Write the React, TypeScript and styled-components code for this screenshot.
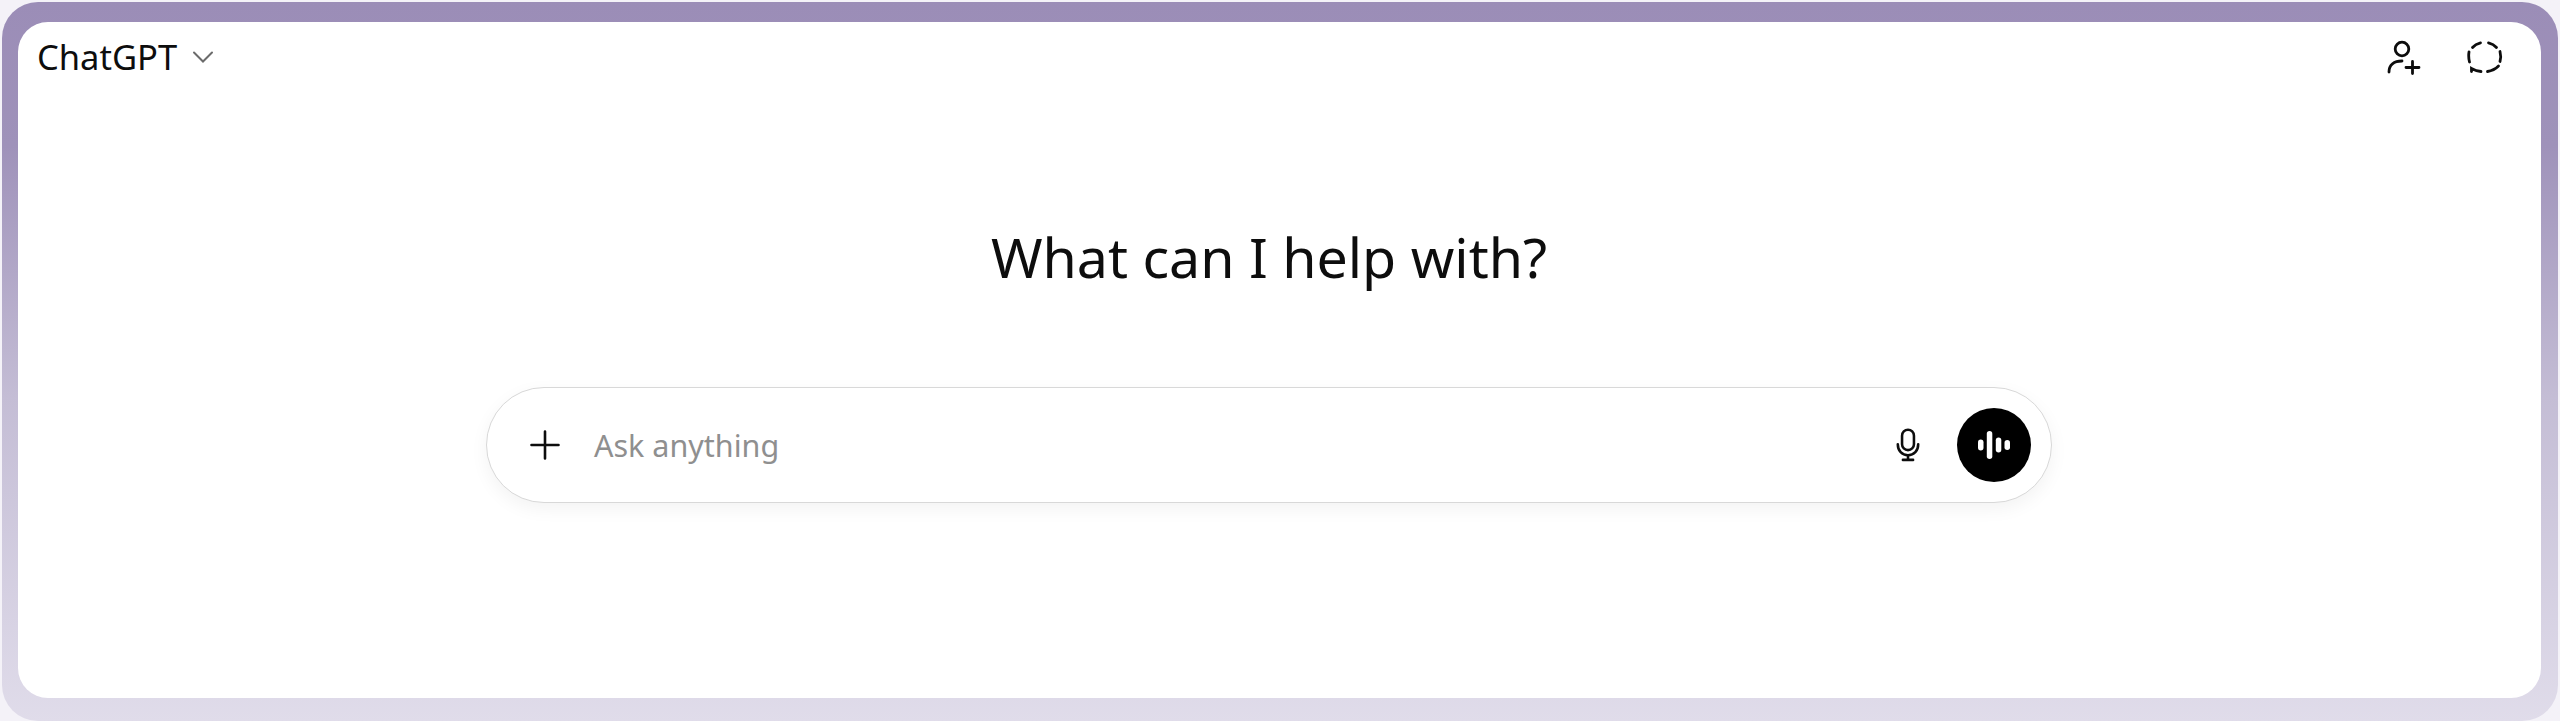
import React from 'react';
import styled, { createGlobalStyle } from 'styled-components';

const GlobalStyle = createGlobalStyle`
  html, body {
    margin: 0;
    background: #f4f2f8;
  }
  body {
    font-family: "Noto Sans", "Open Sans", Arial, sans-serif;
  }
`;

const Frame = styled.div`
  box-sizing: border-box;
  height: 719px;
  margin: 2px 2px 0;
  padding: 20px 17px 23px 16px;
  border-radius: 36px;
  background: linear-gradient(180deg, #9b8db7 0%, #9f92ba 20%, #c4bdd5 55%, #e0dcea 100%);
`;

const Panel = styled.main`
  display: flex;
  flex-direction: column;
  box-sizing: border-box;
  height: 100%;
  padding: 0 19px;
  border-radius: 30px;
  background: #ffffff;
`;

const Header = styled.header`
  display: flex;
  align-items: center;
  justify-content: space-between;
  height: 70px;
  flex: none;
`;

const ModelPicker = styled.button`
  display: flex;
  align-items: center;
  gap: 15px;
  padding: 0;
  border: none;
  background: none;
  font: inherit;
  font-size: 34.5px;
  line-height: 48px;
  color: #0d0d0d;
`;

const HeaderActions = styled.div`
  display: flex;
  align-items: center;
  gap: 45px;
  padding-right: 19px;
`;

const IconButton = styled.button`
  display: flex;
  align-items: center;
  justify-content: center;
  padding: 0;
  border: none;
  background: none;
  color: #0d0d0d;
`;

const Center = styled.section`
  display: flex;
  flex-direction: column;
  width: 1566px;
  margin-left: 449px;
`;

const Heading = styled.h1`
  margin: 130px 0 0;
  text-align: center;
  font-size: 55.5px;
  font-weight: 400;
  line-height: 70px;
  color: #0d0d0d;
`;

const Composer = styled.div`
  display: flex;
  align-items: center;
  box-sizing: border-box;
  height: 116px;
  margin-top: 95px;
  padding: 0 20px 0 43px;
  border: 1.5px solid #d8d8d8;
  border-radius: 58px;
  background: #ffffff;
  box-shadow: 0 6px 18px rgba(0, 0, 0, 0.05);
`;

const Placeholder = styled.span`
  flex: 1;
  margin-left: 34px;
  font-size: 30.5px;
  color: #8f8f8f;
`;

const VoiceButton = styled.button`
  display: flex;
  align-items: center;
  justify-content: center;
  width: 74px;
  height: 74px;
  margin-left: 36px;
  padding: 0;
  border: none;
  border-radius: 50%;
  background: #000000;
  color: #ffffff;
`;

const UserPlusIcon = () => (
  <svg width="36" height="36" viewBox="0 0 36 36" fill="none" stroke="currentColor" strokeWidth="2.8" strokeLinecap="round">
    <circle cx="16" cy="10" r="6.8" />
    <path d="M3 33c0-7 5-11 13-11" />
    <path d="M20 28.5h13M26.5 22.5v12" />
  </svg>
);

const DashedChatIcon = () => (
  <svg width="36" height="33" viewBox="0 0 36 33" fill="none" stroke="currentColor" strokeWidth="2.8" strokeLinecap="round">
    <path d="M2 11Q1.2 16 2.5 21" />
    <path d="M5.5 6.5Q8.5 3 13.5 1.8" />
    <path d="M21.5 1.8Q26.5 3 29.5 6.5" />
    <path d="M33 10.5Q34.4 16 33 20.5" />
    <path d="M31.5 25Q27 29.5 20.5 30.5" />
    <path d="M14 30.5Q9 30 4.5 27.5L4.5 30.5" />
  </svg>
);

const MicIcon = () => (
  <svg width="26" height="34" viewBox="0 0 30 40" fill="none" stroke="currentColor" strokeWidth="3" strokeLinecap="round">
    <rect x="8" y="2" width="14" height="24" rx="7" />
    <path d="M3 19c0 8 5 13 12 13s12-5 12-13" />
    <path d="M15 32v5M9 37.5h12" />
  </svg>
);

const WaveIcon = () => (
  <svg width="32" height="30" viewBox="0 0 32 30" fill="currentColor">
    <rect x="0" y="9.5" width="5.5" height="11" rx="2.75" />
    <rect x="8.8" y="1" width="5.5" height="28" rx="2.75" />
    <rect x="17.8" y="7.5" width="5.5" height="15" rx="2.75" />
    <rect x="26.5" y="10" width="5.5" height="10" rx="2.75" />
  </svg>
);

const App: React.FC = () => (
  <>
    <GlobalStyle />
    <Frame>
      <Panel>
        <Header>
          <ModelPicker>
            ChatGPT
            <svg width="22" height="14" viewBox="0 0 22 14" fill="none" stroke="#6b6b6b" strokeWidth="2" strokeLinecap="round">
              <path d="M2 2.5l9 9 9-9" />
            </svg>
          </ModelPicker>
          <HeaderActions>
            <IconButton><UserPlusIcon /></IconButton>
            <IconButton><DashedChatIcon /></IconButton>
          </HeaderActions>
        </Header>
        <Center>
          <Heading>What can I help with?</Heading>
          <Composer>
            <svg width="30" height="30" viewBox="0 0 30 30" fill="none" stroke="#0d0d0d" strokeWidth="2.6" strokeLinecap="round">
              <path d="M15 1.5v27M1.5 15h27" />
            </svg>
            <Placeholder>Ask anything</Placeholder>
            <IconButton><MicIcon /></IconButton>
            <VoiceButton><WaveIcon /></VoiceButton>
          </Composer>
        </Center>
      </Panel>
    </Frame>
  </>
);

export default App;
